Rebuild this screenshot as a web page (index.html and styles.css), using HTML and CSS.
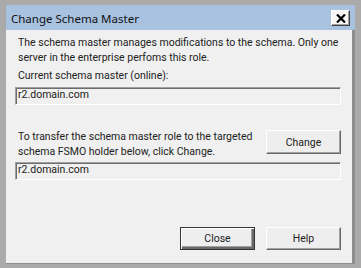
FILE: index.html
```html
<!DOCTYPE html>
<html lang="en">
<head>
    <meta charset="UTF-8">
    <title>Change Schema Master</title>
    <link rel="stylesheet" href="styles.css">
</head>
<body>
    <div class="window">
        <div class="titlebar">
            <span class="title">Change Schema Master</span>
            <button class="close-x" aria-label="Close">
                <svg width="10" height="9" viewBox="0 0 10 9">
                    <path d="M1 0.5 L9 8.5 M9 0.5 L1 8.5" stroke="#000" stroke-width="2.2"/>
                </svg>
            </button>
        </div>

        <div class="content">
            <p class="text intro">The schema master manages modifications to the schema. Only one server in the enterprise perfoms this role.</p>

            <p class="text label">Current schema master (online):</p>
            <div class="field">r2.domain.com</div>

            <div class="transfer">
                <p class="text">To transfer the schema master role to the targeted schema FSMO holder below, click Change.</p>
                <button class="btn change">Change</button>
            </div>
            <div class="field">r2.domain.com</div>

            <div class="actions">
                <button class="btn default">Close</button>
                <button class="btn">Help</button>
            </div>
        </div>
    </div>
</body>
</html>
```

FILE: styles.css
```css
body {
    margin: 0;
    background: #a9a9a9;
    font-family: Roboto, "Liberation Sans", Arial, sans-serif;
}

.window {
    width: 361px;
    height: 268px;
    box-sizing: border-box;
    padding: 5px 6px 4px 6px;
    display: flex;
    flex-direction: column;
    background: #aaaaaa;
}

.titlebar {
    height: 25px;
    background: #a8c2e0;
    display: flex;
    align-items: center;
    justify-content: space-between;
    padding: 0 5px 0 5px;
}

.title {
    font-family: "Noto Sans", sans-serif;
    font-size: 11.5px;
    color: #111;
    padding-top: 1px;
}

.close-x {
    width: 19px;
    height: 16px;
    padding: 0;
    margin-top: 1px;
    display: flex;
    align-items: center;
    justify-content: center;
    background: #f7f7f7;
    border: 1px solid;
    border-color: #ffffff #404040 #404040 #ffffff;
    box-shadow: inset -1px -1px #a0a0a0;
}

.content {
    flex: 1;
    background: #f0f0f0;
    border-right: 3px solid #8e8e8e;
    border-bottom: 1px solid #8e8e8e;
    padding: 6px 11px 0 9px;
    color: #222;
}

.text {
    margin: 0;
    padding-left: 3px;
    font-size: 10.5px;
    line-height: 14.5px;
}

.label {
    margin-top: 3.5px;
}

.field {
    margin-top: 4px;
    height: 18px;
    box-sizing: border-box;
    border: 1px solid;
    border-color: #a0a0a0 #ffffff #ffffff #a0a0a0;
    box-shadow: inset 1px 1px #6d6d6d;
    font-size: 10.5px;
    line-height: 14px;
    padding-left: 2px;
    color: #222;
}

.transfer {
    margin-top: 24px;
    display: flex;
    justify-content: space-between;
    align-items: flex-start;
}

.transfer .text {
    line-height: 15px;
}

.transfer + .field {
    margin-top: 3px;
}

.btn {
    width: 75px;
    height: 23px;
    padding: 0;
    font-family: Roboto, "Liberation Sans", Arial, sans-serif;
    font-size: 10.5px;
    color: #222;
    background: #eeeeee;
    border: 1px solid;
    border-color: #ffffff #696969 #696969 #ffffff;
    box-shadow: inset -1px -1px #a0a0a0;
    flex-shrink: 0;
}

.change {
    height: 24px;
    margin-top: 1px;
}

.btn.default {
    border: 1px solid #333;
    box-shadow: inset 1px 1px #ffffff, inset -2px -2px #696969, inset -3px -3px #a0a0a0;
}

.actions {
    margin-top: 47px;
    display: flex;
    justify-content: flex-end;
    gap: 11px;
}
```
